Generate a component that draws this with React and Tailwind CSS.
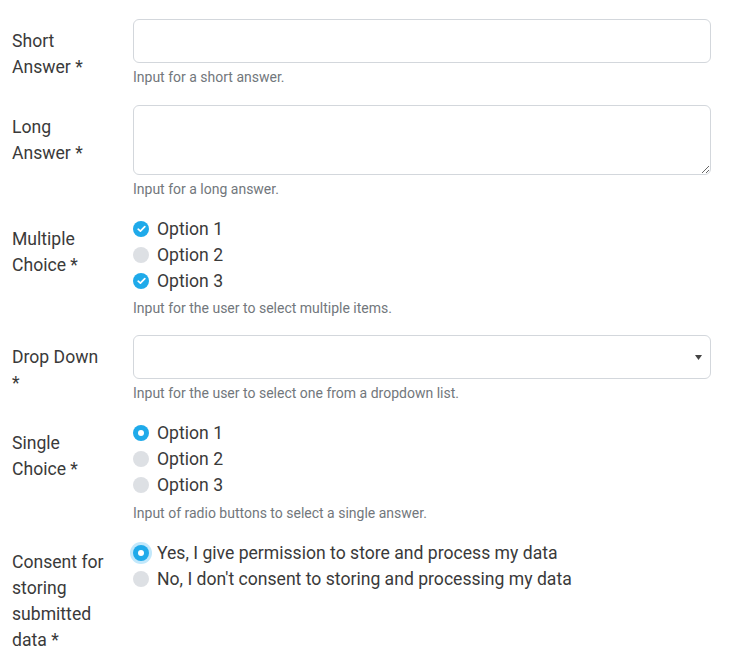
import React from "react";

const font = { fontFamily: "Roboto, 'Liberation Sans', sans-serif" };

function Check({ checked }) {
  return checked ? (
    <span className="flex h-4 w-4 shrink-0 items-center justify-center rounded-full bg-[#1faaea]">
      <svg width="9" height="8" viewBox="0 0 9 8" fill="none">
        <path d="M1.2 4.2 L3.4 6.2 L7.8 1.6" stroke="white" strokeWidth="1.7" strokeLinecap="round" strokeLinejoin="round" />
      </svg>
    </span>
  ) : (
    <span className="h-4 w-4 shrink-0 rounded-full bg-[#dde0e4]" />
  );
}

function Radio({ checked, focus }) {
  return checked ? (
    <span className={"flex h-4 w-4 shrink-0 items-center justify-center rounded-full bg-[#1faaea] " + (focus ? "ring-[3px] ring-[#c2e8fb]" : "")}>
      <span className="h-[6px] w-[6px] rounded-full bg-white" />
    </span>
  ) : (
    <span className="h-4 w-4 shrink-0 rounded-full bg-[#dde0e4]" />
  );
}

function Row({ label, children, className = "" }) {
  return (
    <div className={"flex " + className}>
      <div className="w-[121px] shrink-0 px-3 pt-[9px] text-[17.6px] leading-[26px] text-[#3a3a3a]">{label}</div>
      <div className="min-w-0 flex-1 px-3">{children}</div>
    </div>
  );
}

function Help({ children, className = "mt-[4px]" }) {
  return <div className={"text-[14px] leading-[20px] text-[#72777c] " + className}>{children}</div>;
}

function Option({ control, children }) {
  return (
    <div className="flex items-center gap-[8px] text-[17.6px] leading-[26px] text-[#3a3a3a]">
      {control}
      <span>{children}</span>
    </div>
  );
}

export default function App() {
  return (
    <div className="w-[731px] bg-white pr-[8px] pt-[19px] pb-[10px]" style={font}>
      <Row label="Short Answer *">
        <input className="block h-[44px] w-full rounded-[6px] border border-[#d3d7dc] bg-white px-3 outline-none" />
        <Help>Input for a short answer.</Help>
      </Row>
      <Row label="Long Answer *" className="mt-[18px]">
        <textarea className="block h-[70px] w-full rounded-[6px] border border-[#d3d7dc] bg-white px-3 outline-none" />
        <Help>Input for a long answer.</Help>
      </Row>
      <Row label="Multiple Choice *" className="mt-[18px]">
        <div className="-mt-px">
          <Option control={<Check checked />}>Option 1</Option>
          <Option control={<Check />}>Option 2</Option>
          <Option control={<Check checked />}>Option 3</Option>
        </div>
        <Help>Input for the user to select multiple items.</Help>
      </Row>
      <Row label="Drop Down *" className="mt-[17px]">
        <div className="flex h-[44px] w-full items-center justify-end rounded-[6px] border border-[#d3d7dc] bg-white pr-[8px]">
          <svg width="7" height="5" viewBox="0 0 7 5"><path d="M0 0 H7 L3.5 5 Z" fill="#444" /></svg>
        </div>
        <Help>Input for the user to select one from a dropdown list.</Help>
      </Row>
      <Row label="Single Choice *" className="mt-[18px]">
        <div className="-mt-px">
          <Option control={<Radio checked />}>Option 1</Option>
          <Option control={<Radio />}>Option 2</Option>
          <Option control={<Radio />}>Option 3</Option>
        </div>
        <Help className="mt-[5px]">Input of radio buttons to select a single answer.</Help>
      </Row>
      <Row label="Consent for storing submitted data *" className="mt-[17px]">
        <div>
          <Option control={<Radio checked focus />}>Yes, I give permission to store and process my data</Option>
          <Option control={<Radio />}>No, I don't consent to storing and processing my data</Option>
        </div>
      </Row>
    </div>
  );
}
